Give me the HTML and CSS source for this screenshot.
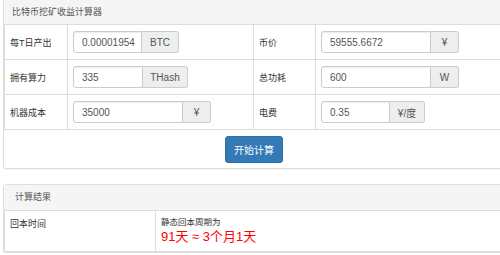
FILE: index.html
```html
<!DOCTYPE html>
<html lang="zh-CN">
<head>
  <meta charset="UTF-8" />
  <meta name="viewport" content="width=device-width, initial-scale=1.0" />
  <title>比特币挖矿收益计算器</title>
  <link rel="stylesheet" href="styles.css">
</head>
<body>

  <div class="panel panel-form">
    <div class="panel-heading">比特币挖矿收益计算器</div>
    <div class="form-grid">
      <div class="cell label">每T日产出</div>
      <div class="cell">
        <div class="input-group">
          <input class="field w69" value="0.00001954">
          <span class="addon w37">BTC</span>
        </div>
      </div>
      <div class="cell label">币价</div>
      <div class="cell">
        <div class="input-group">
          <input class="field w110" value="59555.6672">
          <span class="addon w28">¥</span>
        </div>
      </div>

      <div class="cell label">拥有算力</div>
      <div class="cell">
        <div class="input-group">
          <input class="field w70" value="335">
          <span class="addon w45">THash</span>
        </div>
      </div>
      <div class="cell label">总功耗</div>
      <div class="cell">
        <div class="input-group">
          <input class="field w110" value="600">
          <span class="addon w28">W</span>
        </div>
      </div>

      <div class="cell label">机器成本</div>
      <div class="cell">
        <div class="input-group">
          <input class="field w110" value="35000">
          <span class="addon w28">¥</span>
        </div>
      </div>
      <div class="cell label">电费</div>
      <div class="cell">
        <div class="input-group">
          <input class="field w69" value="0.35">
          <span class="addon w35">¥/度</span>
        </div>
      </div>
    </div>
    <div class="panel-footer">
      <button class="btn-primary" onclick="calc()">开始计算</button>
    </div>
  </div>

  <div class="panel panel-result">
    <div class="panel-heading">计算结果</div>
    <div class="result-grid">
      <div class="cell label top">回本时间</div>
      <div class="cell top">
        <div class="result-caption">静态回本周期为</div>
        <div class="result-value" id="payback">91天 ≈ 3个月1天</div>
      </div>
    </div>
  </div>

  <script>
    function calc() {
      const v = Array.from(document.querySelectorAll(".field")).map(f => parseFloat(f.value));
      // 每T日产出, 币价, 算力, 功耗, 成本, 电费
      const income = v[0] * v[2] * v[1];
      const power = v[3] * 24 / 1000 * v[5];
      const days = Math.ceil(v[4] / (income - power));
      const months = Math.floor(days / 30);
      document.getElementById("payback").textContent =
        days + "天 ≈ " + months + "个月" + (days - months * 30) + "天";
    }
  </script>

</body>
</html>
```

FILE: styles.css
```css
body {
  margin: 0;
  background: #fff;
  color: #333;
  font-family: "Liberation Sans", "Noto Sans CJK SC", sans-serif;
  font-size: 9px;
  overflow: hidden;
}

.panel {
  width: 500px;
  margin-left: 3px;
  background: #fff;
  border: 1px solid #ddd;
  border-radius: 3px;
  box-shadow: 0 1px 1px rgba(0, 0, 0, 0.05);
}

.panel-form {
  margin-top: -1px;
  margin-bottom: 15px;
}

.panel-heading {
  height: 24px;
  line-height: 24px;
  padding-left: 8px;
  background: #f5f5f5;
  border-bottom: 1px solid #ddd;
  color: #555;
}

.panel-result .panel-heading {
  height: 25px;
  line-height: 25px;
  padding-left: 11px;
}

.form-grid {
  display: grid;
  grid-template-columns: 63px 186px 62px 1fr;
  border-left: 1px solid #ddd;
}

.cell {
  display: flex;
  align-items: center;
  height: 34px;
  padding-left: 5px;
  border-right: 1px solid #ddd;
  border-bottom: 1px solid #ddd;
}

.label {
  color: #333;
}

.input-group {
  display: flex;
  height: 22px;
}

.field {
  box-sizing: border-box;
  height: 22px;
  padding: 0 0 0 8px;
  border: 1px solid #ccc;
  border-radius: 3px 0 0 3px;
  font-family: "Liberation Sans", "Noto Sans CJK SC", sans-serif;
  font-size: 10px;
  color: #555;
  box-shadow: inset 0 1px 1px rgba(0, 0, 0, 0.075);
  outline: none;
}

.addon {
  box-sizing: border-box;
  display: flex;
  align-items: center;
  justify-content: center;
  height: 22px;
  border: 1px solid #ccc;
  border-left: 0;
  border-radius: 0 3px 3px 0;
  background: #eee;
  color: #555;
  font-size: 10px;
}

.w69 { width: 69px; }
.w70 { width: 70px; }
.w110 { width: 110px; }
.w28 { width: 28px; }
.w35 { width: 35px; }
.w37 { width: 37px; }
.w45 { width: 45px; }

.panel-footer {
  display: flex;
  justify-content: center;
  align-items: center;
  height: 38px;
}

.btn-primary {
  width: 58px;
  height: 27px;
  padding: 0;
  background: #337ab7;
  border: 1px solid #2e6da4;
  border-radius: 3px;
  color: #fff;
  font-family: "Liberation Sans", "Noto Sans CJK SC", sans-serif;
  font-size: 10px;
  cursor: pointer;
}

.btn-primary:hover {
  background: #286090;
}

.result-grid {
  display: grid;
  grid-template-columns: 151px 1fr;
  border-left: 1px solid #ddd;
}

.result-grid .cell {
  height: 34px;
  padding-top: 6px;
}

.top {
  align-items: flex-start;
  flex-direction: column;
}

.result-caption {
  font-size: 8.5px;
  line-height: 11px;
}

.result-value {
  margin-top: 1px;
  color: #f00;
  font-size: 13px;
  line-height: 16px;
}
```
